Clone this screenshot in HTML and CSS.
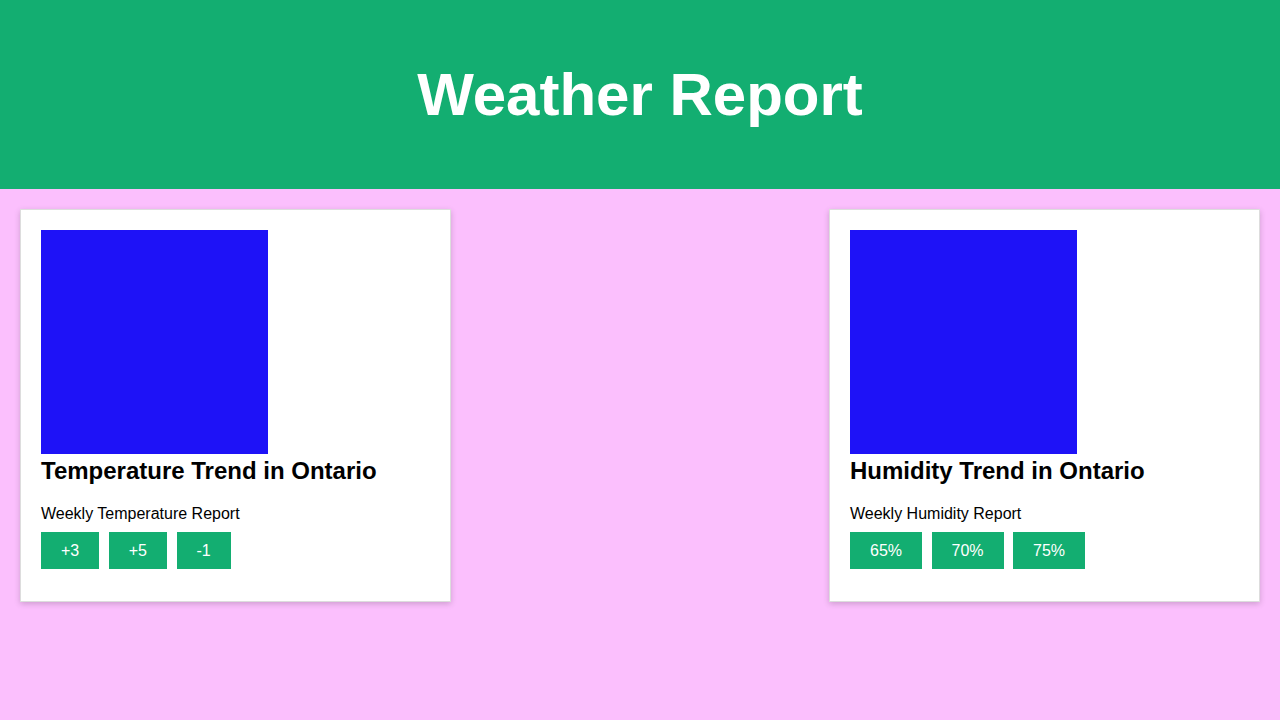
FILE: index.html
```html
<!DOCTYPE html>
<html lang="en">
<head>
<meta charset="utf-8">
<title>Weather Report</title>
<link rel="stylesheet" href="styles.css">
</head>
<body>
<header class="site-header">
  <h1 class="site-title">Weather Report</h1>
</header>
<main class="cards">
  <section class="card">
    <div class="chart"></div>
    <h2 class="card-title">Temperature Trend in Ontario</h2>
    <p class="card-text">Weekly Temperature Report</p>
    <div class="chips">
      <span class="chip">+3</span>
      <span class="chip">+5</span>
      <span class="chip">-1</span>
    </div>
  </section>
  <section class="card">
    <div class="chart"></div>
    <h2 class="card-title">Humidity Trend in Ontario</h2>
    <p class="card-text">Weekly Humidity Report</p>
    <div class="chips">
      <span class="chip">65%</span>
      <span class="chip">70%</span>
      <span class="chip">75%</span>
    </div>
  </section>
</main>
</body>
</html>
```

FILE: styles.css
```css
html, body {
  margin: 0;
  padding: 0;
}
body {
  background: #fbbffd;
  font-family: "Liberation Sans", Arial, sans-serif;
  color: #000;
  min-height: 720px;
}
.site-header {
  background: #13ae71;
  padding: 20px;
  text-align: center;
}
.site-title {
  margin: 40px 0;
  font-size: 60px;
  line-height: 69px;
  font-weight: bold;
  color: #fff;
}
.cards {
  display: flex;
  justify-content: space-between;
  align-items: flex-start;
  padding: 20px;
}
.card {
  width: 389px;
  background: #fff;
  border: 1px solid #ddd;
  padding: 20px;
  box-shadow: 0 2px 6px rgba(0, 0, 0, 0.18);
}
.chart {
  width: 227px;
  height: 224px;
  background: #1e12f7;
}
.card-title {
  margin: 3px 0 20px;
  font-size: 24px;
  line-height: 28px;
  font-weight: bold;
}
.card-text {
  margin: 0 0 9px;
  font-size: 16px;
  line-height: 18px;
}
.chips {
  display: flex;
  gap: 9.5px;
  margin-bottom: 12px;
}
.chip {
  display: block;
  background: #13ae71;
  color: #fff;
  font-size: 16px;
  line-height: 17px;
  padding: 10px 20px;
}
```
